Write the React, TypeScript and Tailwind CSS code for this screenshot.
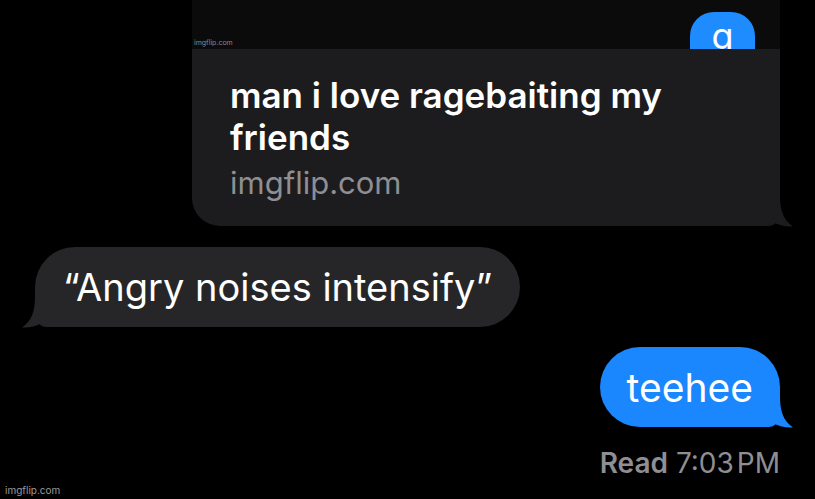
import type { ReactNode } from "react";

const FONT = "font-['Inter','Liberation_Sans',sans-serif]";

/** iMessage-style bubble tail, drawn over the bubble's bottom corner */
function Tail({ side, color }: { side: "left" | "right"; color: string }) {
  return (
    <svg
      width="26"
      height="31"
      viewBox="0 0 26 31"
      className={
        side === "right"
          ? "pointer-events-none absolute -right-[13px] -bottom-[1px]"
          : "pointer-events-none absolute -left-[13px] -bottom-[1px] -scale-x-100"
      }
    >
      <path
        d="M0 0 H13 C13 13 16 24 26 30.5 C18 31 11 29 6 26 C4 28.5 2 30 0 30 Z"
        fill={color}
      />
    </svg>
  );
}

function Bubble({
  side,
  color,
  children,
  className = "",
}: {
  side: "left" | "right";
  color: string;
  children: ReactNode;
  className?: string;
}) {
  return (
    <div
      className={`relative flex h-[80px] w-fit items-center rounded-[40px] ${
        side === "right" ? "rounded-br-[12px]" : "rounded-bl-[12px]"
      } ${className}`}
      style={{ backgroundColor: color }}
    >
      {children}
      <Tail side={side} color={color} />
    </div>
  );
}

export default function App() {
  return (
    <div className={`relative flex h-[499px] w-[815px] flex-col overflow-hidden bg-black ${FONT}`}>
      {/* link preview card */}
      <div className="relative ml-[192px] flex w-[588px] flex-col">
        <div className="flex h-[49px] items-start justify-between overflow-hidden bg-[#0b0b0b]">
          <span className="mb-[3px] ml-[2px] self-end text-[7px] leading-none text-[#8a8a8a]">
            imgflip.com
          </span>
          <div className="mr-[25px] mt-[12px] flex h-[64px] w-[65px] shrink-0 justify-center rounded-[24px] bg-[#1e8bff] pt-[6px] text-[36px] leading-none text-white">
            g
          </div>
        </div>
        <div className="h-[177px] rounded-b-[28px] rounded-br-[12px] bg-[#1c1c1e] pl-[38px] pt-[25px]">
          <p className="w-[480px] text-[35px] font-semibold leading-[42px] text-white">
            man i love ragebaiting my friends
          </p>
          <p className="mt-[5px] text-[31px] leading-[40px] text-[#8e8e93]">imgflip.com</p>
        </div>
        <Tail side="right" color="#1c1c1e" />
      </div>

      <Bubble side="left" color="#262628" className="ml-[35px] mt-[21px] px-[28px]">
        <span className="text-[38px] leading-none text-white">“Angry noises intensify”</span>
      </Bubble>

      <Bubble side="right" color="#1b87fe" className="mr-[35px] mt-[20px] self-end px-[27px]">
        <span className="text-[39px] leading-none text-white">teehee</span>
      </Bubble>

      <p className="mr-[35px] mt-[22px] self-end text-[28px] leading-none text-[#8e8e93]">
        <span className="font-semibold">Read</span> 7:03<span className="ml-[3px]">PM</span>
      </p>

      <span className="absolute bottom-[4px] left-[5px] text-[10px] leading-none text-[#9a9a9a]">
        imgflip.com
      </span>
    </div>
  );
}
